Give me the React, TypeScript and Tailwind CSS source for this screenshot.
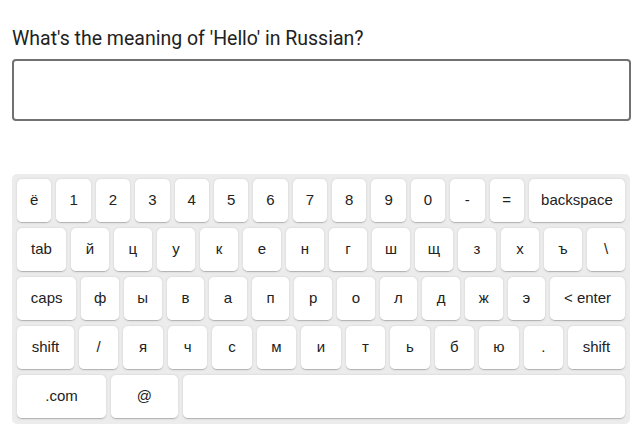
import React from "react";

/* ── Layout data ── */

const ROWS: string[][] = [
  ["ё", "1", "2", "3", "4", "5", "6", "7", "8", "9", "0", "-", "=", "{bksp}"],
  ["{tab}", "й", "ц", "у", "к", "е", "н", "г", "ш", "щ", "з", "х", "ъ", "\\"],
  ["{lock}", "ф", "ы", "в", "а", "п", "р", "о", "л", "д", "ж", "э", "{enter}"],
  ["{shift}", "/", "я", "ч", "с", "м", "и", "т", "ь", "б", "ю", ".", "{shift}"],
  [".com", "@", "{space}"],
];

const DISPLAY: Record<string, string> = {
  "{bksp}": "backspace",
  "{tab}": "tab",
  "{lock}": "caps",
  "{enter}": "< enter",
  "{shift}": "shift",
  "{space}": " ",
};

function Key({ value }: { value: string }) {
  const isFn = value.startsWith("{") || value.length > 1;
  const isSpace = value === "{space}";
  const label = DISPLAY[value] ?? value;

  return (
    <div
      className={[
        "flex h-[44px] grow items-center justify-center whitespace-nowrap rounded-[5px] border-b border-[#b5b5b5] bg-white px-[5px] text-[15px] text-[#222] shadow-[0_0_3px_-1px_rgba(0,0,0,0.3)]",
        isSpace ? "w-[396px]" : isFn ? "" : "w-5",
      ].join(" ")}
    >
      {label}
    </div>
  );
}

export default function App() {
  return (
    <div className="min-h-[430px] bg-white pl-3 pt-[25px]">
      <div className="w-[619px]">
        <h1 className="text-[19.5px] leading-[27px] text-[#222] font-['Roboto',sans-serif]">
          What's the meaning of 'Hello' in Russian?
        </h1>
        <input
          type="text"
          className="mt-[7px] block h-[62px] w-[619px] rounded-[4px] border-2 border-[#717171] bg-white px-3 outline-none"
        />

        {/* Keyboard */}
        <div className="mt-[53px] flex w-[618px] flex-col gap-[5px] rounded-[5px] bg-[#ececec] p-[5px] font-['Liberation_Sans',Arial,sans-serif]">
          {ROWS.map((row, i) => (
            <div key={i} className="flex gap-[5px]">
              {row.map((k, j) => (
                <Key key={j} value={k} />
              ))}
            </div>
          ))}
        </div>
      </div>
    </div>
  );
}
